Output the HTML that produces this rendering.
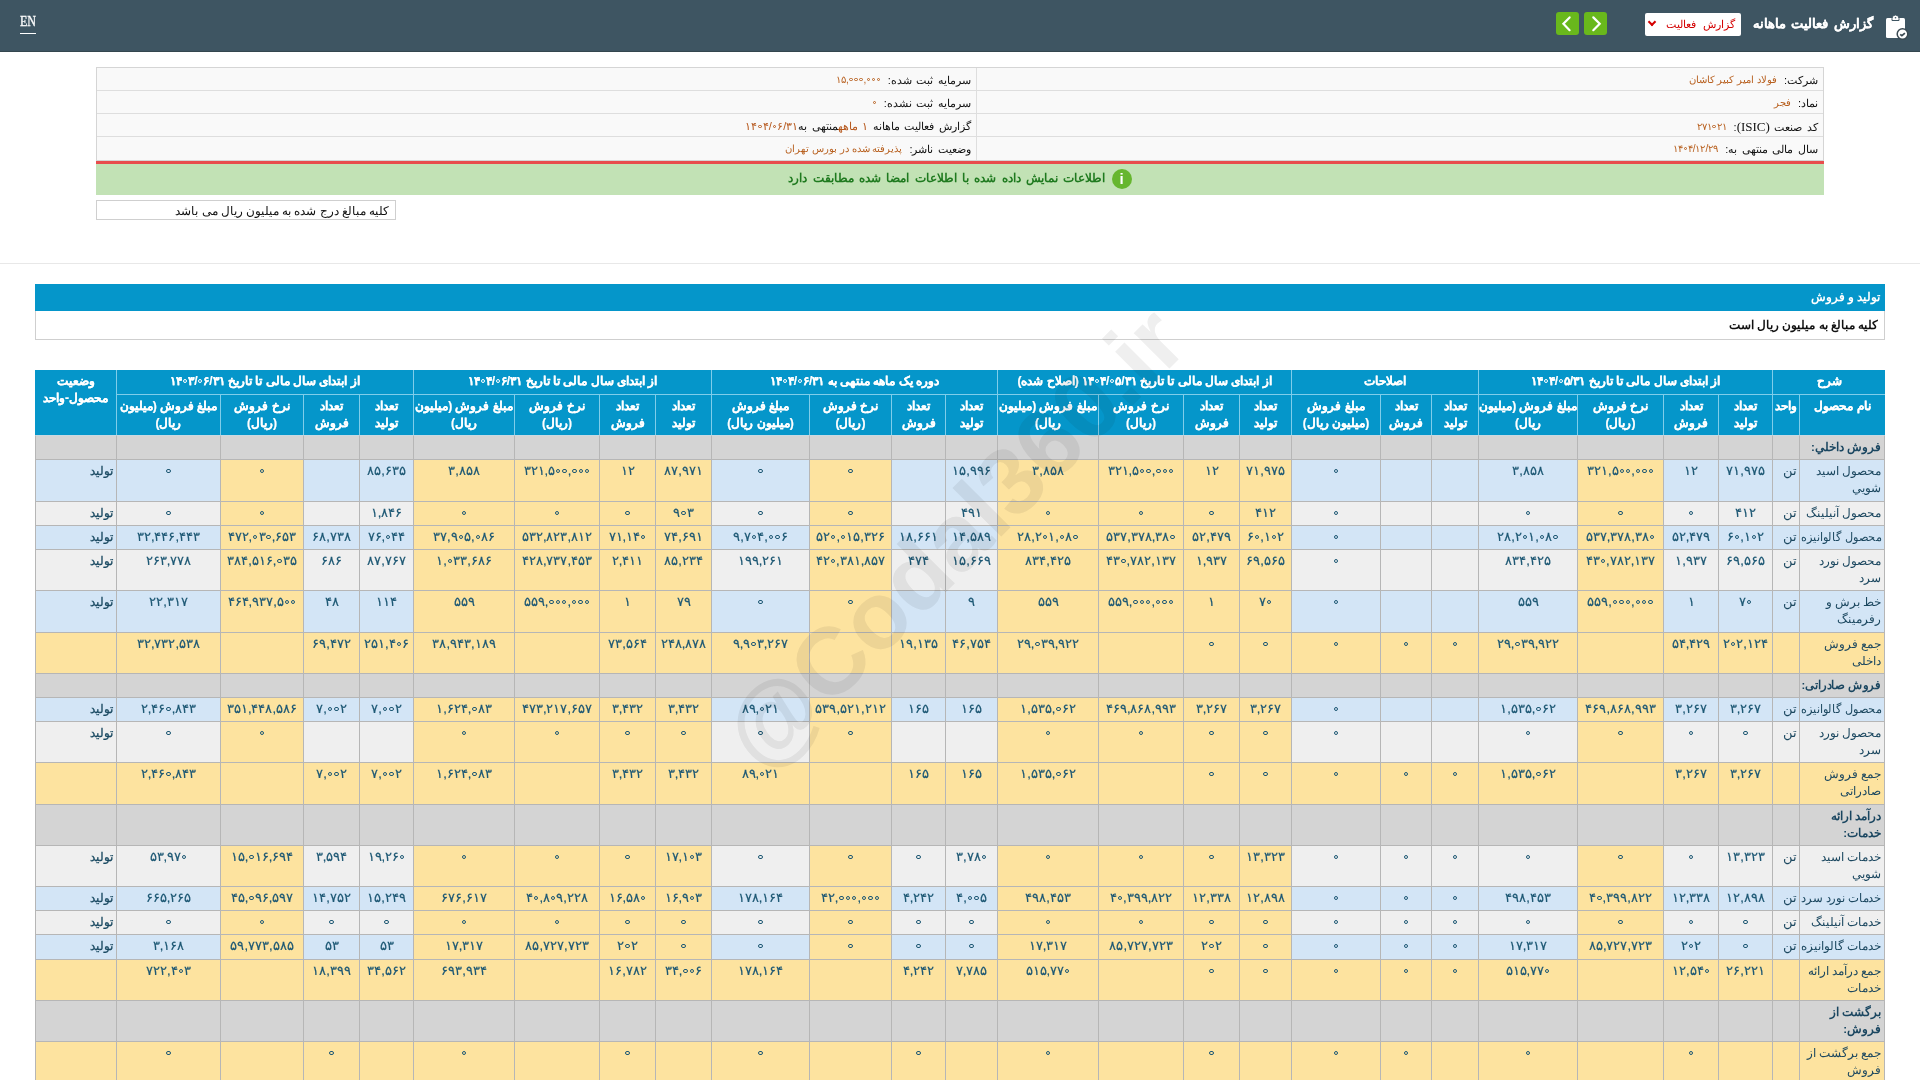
<!DOCTYPE html>
<html lang="fa" dir="rtl">
<head>
<meta charset="utf-8">
<title>گزارش فعالیت ماهانه</title>
<style>
*{box-sizing:border-box;margin:0;padding:0}
html,body{width:1920px;height:1080px;overflow:hidden;background:#fff}
body{position:relative;font-family:"Liberation Sans",sans-serif;font-size:12px;color:#222}
.abs{position:absolute}
#topbar{position:absolute;left:0;top:0;width:1920px;height:52px;background:#3e5562;border-bottom:1px solid #34474f}
#en{position:absolute;left:20px;top:14px;font-family:"Liberation Serif",serif;font-size:14px;font-weight:normal;-webkit-text-stroke:0.3px #fff;color:#fff;direction:ltr;border-bottom:1px solid #fff;line-height:16px;padding-bottom:3px;width:16px;overflow:visible;white-space:nowrap}
#title{position:absolute;right:47px;top:14px;color:#fff;font-size:13px;word-spacing:2px;font-weight:bold;-webkit-text-stroke:0.15px #fff;line-height:20px;white-space:nowrap}
#sel{position:absolute;left:1645px;top:13px;width:96px;height:23px;background:#fff;border-radius:2px;color:#d40000;font-size:11px;line-height:23px;word-spacing:4px;padding-right:6px;white-space:nowrap;overflow:hidden}
#sel .arr{position:absolute;left:4px;top:6px;width:6px;height:6px;border-right:2.5px solid #d40000;border-bottom:2.5px solid #d40000;transform:rotate(45deg)}
.gbtn{position:absolute;top:12px;width:23px;height:23px;background:#69b81c;border-radius:3px}
.gbtn i{position:absolute;top:6px;width:11px;height:11px;border-left:3px solid #fff;border-bottom:3px solid #fff}
#info{position:absolute;left:96px;top:67px;width:1728px;height:94px;border:1px solid #d5d5d5;background:#f9f9f9}
.ir{position:absolute;height:23px;border-bottom:1px solid #dedede;font-size:11px;word-spacing:1.5px;line-height:25px;white-space:nowrap;color:#111}
.ir .v{color:#b8601f;margin-right:7px;font-size:10px;word-spacing:0;position:relative;top:-1px}
.ser{font-family:"Liberation Serif",serif;font-size:13px}
#redline{position:absolute;left:96px;top:161px;width:1728px;height:3px;background:#e84c4c}
#green{position:absolute;left:96px;top:164px;width:1728px;height:31px;background:#c2e2b5;color:#1f7a1f;font-size:12px;word-spacing:2px;font-weight:bold;text-align:center;line-height:29px}
#green .ic{display:inline-block;width:20px;height:20px;border-radius:50%;background:#66b62e;color:#fff;font-size:15px;line-height:20px;vertical-align:middle;margin-left:6px;font-family:"Liberation Sans",sans-serif;font-weight:bold;text-align:center}
#note{position:absolute;left:96px;top:200px;width:300px;height:20px;border:1px solid #cfcfcf;background:#fff;font-size:11.5px;line-height:20px;padding-right:6px;white-space:nowrap;color:#111}
#hr{position:absolute;left:0;top:263px;width:1920px;height:1px;background:#e8e8e8}
#sec{position:absolute;left:35px;top:284px;width:1850px;height:27px;background:#0596ca;color:#fff;font-weight:bold;font-size:11.5px;line-height:27px;padding-right:5px}
#sub{position:absolute;left:35px;top:311px;width:1850px;height:29px;border:1px solid #cfcfcf;border-top:none;background:#fff;color:#111;font-weight:bold;font-size:11.5px;line-height:28px;padding-right:6px}
.c{position:absolute;border-left:1px solid #b6b6b6;border-top:1px solid #b6b6b6;overflow:hidden;white-space:nowrap;font-size:12px;line-height:17px;padding-top:3px;text-align:center;color:#184f68}
.c .num{font-weight:normal;font-size:13px;-webkit-text-stroke:0.2px currentColor;color:#1d5874;direction:ltr;unicode-bidi:bidi-override;display:inline-block;position:relative;top:-1px}
.z{display:inline-block;width:.34em;height:.34em;border:.125em solid currentColor;border-radius:50%;margin:0 .08em 0 .07em;vertical-align:.16em}
.c .nm{display:block;text-align:right;padding-right:3px;color:#1c4860;font-size:11.5px;letter-spacing:-0.2px}
.c .cat{font-weight:bold;color:#1a4660}
.c .unit{display:block;text-align:right;padding-right:2px;color:#1c4860;font-size:13px;position:relative;top:-1px}
.c .st{display:block;text-align:right;padding-right:3px;color:#1a4a62;-webkit-text-stroke:0.3px #1a4a62}
.h{position:absolute;background:#0596ca;color:#fff;font-weight:bold;-webkit-text-stroke:0.2px #fff;text-align:center;font-size:12px;line-height:17px;padding-top:3px;white-space:nowrap;overflow:hidden}
#wm{position:absolute;left:954px;top:538px;font-size:95px;line-height:95px;font-weight:bold;color:rgb(239,239,239);mix-blend-mode:multiply;white-space:nowrap;direction:ltr;transform:translate(-50%,-50%) rotate(-45deg);pointer-events:none;font-family:"Liberation Sans",sans-serif}
</style>
</head>
<body>
<div id="topbar">
  <div id="en"><span style="display:inline-block;transform:scaleX(0.86);transform-origin:0 50%">EN</span></div>
  <div class="gbtn" style="left:1556px"><svg width="23" height="23" viewBox="0 0 23 23" style="position:absolute;left:0;top:0"><path d="M13.6 5.4 L7.4 11.8 L13.6 18.2" stroke="#fff" stroke-width="2.2" fill="none" stroke-linecap="round" stroke-linejoin="miter"/></svg></div>
  <div class="gbtn" style="left:1584px"><svg width="23" height="23" viewBox="0 0 23 23" style="position:absolute;left:0;top:0"><path d="M9.3 5.4 L15.7 11.8 L9.3 18.2" stroke="#fff" stroke-width="2.2" fill="none" stroke-linecap="round" stroke-linejoin="miter"/></svg></div>
  <div id="sel">گزارش فعالیت<span class="arr"></span></div>
  <div id="title">گزارش فعالیت ماهانه</div>
  <svg class="abs" style="left:1884px;top:14px" width="26" height="26" viewBox="0 0 26 26">
    <rect x="2" y="4" width="19" height="20" rx="1.5" fill="#fff"/>
    <path d="M8 6.5 V4.5 A3.5 3.5 0 0 1 15 4.5 V6.5 Z" fill="#fff" stroke="#3e5562" stroke-width="1"/>
    <circle cx="11.5" cy="3.8" r="0.8" fill="#3e5562"/>
    <circle cx="18.5" cy="20" r="5.3" fill="#fff" stroke="#3b4a52" stroke-width="1.5"/>
    <path d="M16.2 20.3 l1.7 1.4 l3 -2.6" stroke="#3b4a52" stroke-width="1.7" fill="none"/>
  </svg>
</div>

<div id="info">
  <div class="ir" style="right:0;top:0;width:847px;border-left:1px solid #dedede;padding-right:5px">شرکت:<span class="v">فولاد امیر کبیر کاشان</span></div>
  <div class="ir" style="right:0;top:23px;width:847px;border-left:1px solid #dedede;padding-right:5px">نماد:<span class="v">فجر</span></div>
  <div class="ir" style="right:0;top:46px;width:847px;border-left:1px solid #dedede;padding-right:5px">کد صنعت <span class="ser">(ISIC)</span>:<span class="v"><bdo dir="ltr">۲۷۱<i class="z"></i>۲۱</bdo></span></div>
  <div class="ir" style="right:0;top:69px;width:847px;border-left:1px solid #dedede;border-bottom:none;padding-right:5px">سال مالی منتهی به:<span class="v"><bdo dir="ltr">۱۴<i class="z"></i>۴/۱۲/۲۹</bdo></span></div>
  <div class="ir" style="left:0;top:0;width:879px;padding-right:5px">سرمایه ثبت شده:<span class="v"><bdo dir="ltr">۱۵,<i class="z"></i><i class="z"></i><i class="z"></i>,<i class="z"></i><i class="z"></i><i class="z"></i></bdo></span></div>
  <div class="ir" style="left:0;top:23px;width:879px;padding-right:5px">سرمایه ثبت نشده:<span class="v"><bdo dir="ltr"><i class="z"></i></bdo></span></div>
  <div class="ir" style="left:0;top:46px;width:879px;padding-right:5px">گزارش فعالیت ماهانه <span style="color:#b5561a">۱ ماهه</span>منتهی به<span style="color:#b5561a"><bdo dir="ltr">۱۴<i class="z"></i>۴/<i class="z"></i>۶/۳۱</bdo></span></div>
  <div class="ir" style="left:0;top:69px;width:879px;border-bottom:none;padding-right:5px">وضعیت ناشر:<span class="v">پذیرفته شده در بورس تهران</span></div>
</div>
<div id="redline"></div>
<div id="green"><span class="ic">i</span>اطلاعات نمایش داده شده با اطلاعات امضا شده مطابقت دارد</div>
<div id="note">کلیه مبالغ درج شده به میلیون ریال می باشد</div>
<div id="hr"></div>

<div id="sec">تولید و فروش</div>
<div id="sub">کلیه مبالغ به میلیون ریال است</div>

<div id="tbl">
<div class="c" style="left:35px;top:435px;width:81px;height:24px;background:#d4d4d4;border-top-color:#c9d9e2"></div>
<div class="c" style="left:116px;top:435px;width:104px;height:24px;background:#d4d4d4;border-top-color:#c9d9e2"></div>
<div class="c" style="left:220px;top:435px;width:83px;height:24px;background:#d4d4d4;border-top-color:#c9d9e2"></div>
<div class="c" style="left:303px;top:435px;width:56px;height:24px;background:#d4d4d4;border-top-color:#c9d9e2"></div>
<div class="c" style="left:359px;top:435px;width:54px;height:24px;background:#d4d4d4;border-top-color:#c9d9e2"></div>
<div class="c" style="left:413px;top:435px;width:101px;height:24px;background:#d4d4d4;border-top-color:#c9d9e2"></div>
<div class="c" style="left:514px;top:435px;width:85px;height:24px;background:#d4d4d4;border-top-color:#c9d9e2"></div>
<div class="c" style="left:599px;top:435px;width:56px;height:24px;background:#d4d4d4;border-top-color:#c9d9e2"></div>
<div class="c" style="left:655px;top:435px;width:56px;height:24px;background:#d4d4d4;border-top-color:#c9d9e2"></div>
<div class="c" style="left:711px;top:435px;width:98px;height:24px;background:#d4d4d4;border-top-color:#c9d9e2"></div>
<div class="c" style="left:809px;top:435px;width:82px;height:24px;background:#d4d4d4;border-top-color:#c9d9e2"></div>
<div class="c" style="left:891px;top:435px;width:54px;height:24px;background:#d4d4d4;border-top-color:#c9d9e2"></div>
<div class="c" style="left:945px;top:435px;width:52px;height:24px;background:#d4d4d4;border-top-color:#c9d9e2"></div>
<div class="c" style="left:997px;top:435px;width:101px;height:24px;background:#d4d4d4;border-top-color:#c9d9e2"></div>
<div class="c" style="left:1098px;top:435px;width:85px;height:24px;background:#d4d4d4;border-top-color:#c9d9e2"></div>
<div class="c" style="left:1183px;top:435px;width:56px;height:24px;background:#d4d4d4;border-top-color:#c9d9e2"></div>
<div class="c" style="left:1239px;top:435px;width:52px;height:24px;background:#d4d4d4;border-top-color:#c9d9e2"></div>
<div class="c" style="left:1291px;top:435px;width:89px;height:24px;background:#d4d4d4;border-top-color:#c9d9e2"></div>
<div class="c" style="left:1380px;top:435px;width:51px;height:24px;background:#d4d4d4;border-top-color:#c9d9e2"></div>
<div class="c" style="left:1431px;top:435px;width:47px;height:24px;background:#d4d4d4;border-top-color:#c9d9e2"></div>
<div class="c" style="left:1478px;top:435px;width:99px;height:24px;background:#d4d4d4;border-top-color:#c9d9e2"></div>
<div class="c" style="left:1577px;top:435px;width:86px;height:24px;background:#d4d4d4;border-top-color:#c9d9e2"></div>
<div class="c" style="left:1663px;top:435px;width:55px;height:24px;background:#d4d4d4;border-top-color:#c9d9e2"></div>
<div class="c" style="left:1718px;top:435px;width:54px;height:24px;background:#d4d4d4;border-top-color:#c9d9e2"></div>
<div class="c" style="left:1772px;top:435px;width:27px;height:24px;background:#d4d4d4;border-top-color:#c9d9e2"></div>
<div class="c" style="left:1799px;top:435px;width:86px;height:24px;background:#d4d4d4;border-right:1px solid #b6b6b6;border-top-color:#c9d9e2"><span class="nm cat">فروش داخلي:</span></div>
<div class="c" style="left:35px;top:459px;width:81px;height:42px;background:#d3e5f6"><span class="st">تولید</span></div>
<div class="c" style="left:116px;top:459px;width:104px;height:42px;background:#d3e5f6"><span class="num"><bdo dir="ltr"><i class="z"></i></bdo></span></div>
<div class="c" style="left:220px;top:459px;width:83px;height:42px;background:#fde39f"><span class="num"><bdo dir="ltr"><i class="z"></i></bdo></span></div>
<div class="c" style="left:303px;top:459px;width:56px;height:42px;background:#d3e5f6"></div>
<div class="c" style="left:359px;top:459px;width:54px;height:42px;background:#d3e5f6"><span class="num">۸۵,۶۳۵</span></div>
<div class="c" style="left:413px;top:459px;width:101px;height:42px;background:#fde39f"><span class="num">۳,۸۵۸</span></div>
<div class="c" style="left:514px;top:459px;width:85px;height:42px;background:#fde39f"><span class="num"><bdo dir="ltr">۳۲۱,۵<i class="z"></i><i class="z"></i>,<i class="z"></i><i class="z"></i><i class="z"></i></bdo></span></div>
<div class="c" style="left:599px;top:459px;width:56px;height:42px;background:#fde39f"><span class="num">۱۲</span></div>
<div class="c" style="left:655px;top:459px;width:56px;height:42px;background:#fde39f"><span class="num">۸۷,۹۷۱</span></div>
<div class="c" style="left:711px;top:459px;width:98px;height:42px;background:#d3e5f6"><span class="num"><bdo dir="ltr"><i class="z"></i></bdo></span></div>
<div class="c" style="left:809px;top:459px;width:82px;height:42px;background:#fde39f"><span class="num"><bdo dir="ltr"><i class="z"></i></bdo></span></div>
<div class="c" style="left:891px;top:459px;width:54px;height:42px;background:#d3e5f6"></div>
<div class="c" style="left:945px;top:459px;width:52px;height:42px;background:#d3e5f6"><span class="num">۱۵,۹۹۶</span></div>
<div class="c" style="left:997px;top:459px;width:101px;height:42px;background:#fde39f"><span class="num">۳,۸۵۸</span></div>
<div class="c" style="left:1098px;top:459px;width:85px;height:42px;background:#fde39f"><span class="num"><bdo dir="ltr">۳۲۱,۵<i class="z"></i><i class="z"></i>,<i class="z"></i><i class="z"></i><i class="z"></i></bdo></span></div>
<div class="c" style="left:1183px;top:459px;width:56px;height:42px;background:#fde39f"><span class="num">۱۲</span></div>
<div class="c" style="left:1239px;top:459px;width:52px;height:42px;background:#fde39f"><span class="num">۷۱,۹۷۵</span></div>
<div class="c" style="left:1291px;top:459px;width:89px;height:42px;background:#d3e5f6"><span class="num"><bdo dir="ltr"><i class="z"></i></bdo></span></div>
<div class="c" style="left:1380px;top:459px;width:51px;height:42px;background:#d3e5f6"></div>
<div class="c" style="left:1431px;top:459px;width:47px;height:42px;background:#d3e5f6"></div>
<div class="c" style="left:1478px;top:459px;width:99px;height:42px;background:#d3e5f6"><span class="num">۳,۸۵۸</span></div>
<div class="c" style="left:1577px;top:459px;width:86px;height:42px;background:#fde39f"><span class="num"><bdo dir="ltr">۳۲۱,۵<i class="z"></i><i class="z"></i>,<i class="z"></i><i class="z"></i><i class="z"></i></bdo></span></div>
<div class="c" style="left:1663px;top:459px;width:55px;height:42px;background:#d3e5f6"><span class="num">۱۲</span></div>
<div class="c" style="left:1718px;top:459px;width:54px;height:42px;background:#d3e5f6"><span class="num">۷۱,۹۷۵</span></div>
<div class="c" style="left:1772px;top:459px;width:27px;height:42px;background:#d3e5f6"><span class="unit">تن</span></div>
<div class="c" style="left:1799px;top:459px;width:86px;height:42px;background:#d3e5f6;border-right:1px solid #b6b6b6"><span class="nm">محصول اسید<br>شويي</span></div>
<div class="c" style="left:35px;top:501px;width:81px;height:24px;background:#efefef"><span class="st">تولید</span></div>
<div class="c" style="left:116px;top:501px;width:104px;height:24px;background:#efefef"><span class="num"><bdo dir="ltr"><i class="z"></i></bdo></span></div>
<div class="c" style="left:220px;top:501px;width:83px;height:24px;background:#fde39f"><span class="num"><bdo dir="ltr"><i class="z"></i></bdo></span></div>
<div class="c" style="left:303px;top:501px;width:56px;height:24px;background:#efefef"></div>
<div class="c" style="left:359px;top:501px;width:54px;height:24px;background:#efefef"><span class="num">۱,۸۴۶</span></div>
<div class="c" style="left:413px;top:501px;width:101px;height:24px;background:#fde39f"><span class="num"><bdo dir="ltr"><i class="z"></i></bdo></span></div>
<div class="c" style="left:514px;top:501px;width:85px;height:24px;background:#fde39f"><span class="num"><bdo dir="ltr"><i class="z"></i></bdo></span></div>
<div class="c" style="left:599px;top:501px;width:56px;height:24px;background:#fde39f"><span class="num"><bdo dir="ltr"><i class="z"></i></bdo></span></div>
<div class="c" style="left:655px;top:501px;width:56px;height:24px;background:#fde39f"><span class="num"><bdo dir="ltr">۹<i class="z"></i>۳</bdo></span></div>
<div class="c" style="left:711px;top:501px;width:98px;height:24px;background:#efefef"><span class="num"><bdo dir="ltr"><i class="z"></i></bdo></span></div>
<div class="c" style="left:809px;top:501px;width:82px;height:24px;background:#fde39f"><span class="num"><bdo dir="ltr"><i class="z"></i></bdo></span></div>
<div class="c" style="left:891px;top:501px;width:54px;height:24px;background:#efefef"></div>
<div class="c" style="left:945px;top:501px;width:52px;height:24px;background:#efefef"><span class="num">۴۹۱</span></div>
<div class="c" style="left:997px;top:501px;width:101px;height:24px;background:#fde39f"><span class="num"><bdo dir="ltr"><i class="z"></i></bdo></span></div>
<div class="c" style="left:1098px;top:501px;width:85px;height:24px;background:#fde39f"><span class="num"><bdo dir="ltr"><i class="z"></i></bdo></span></div>
<div class="c" style="left:1183px;top:501px;width:56px;height:24px;background:#fde39f"><span class="num"><bdo dir="ltr"><i class="z"></i></bdo></span></div>
<div class="c" style="left:1239px;top:501px;width:52px;height:24px;background:#fde39f"><span class="num">۴۱۲</span></div>
<div class="c" style="left:1291px;top:501px;width:89px;height:24px;background:#efefef"><span class="num"><bdo dir="ltr"><i class="z"></i></bdo></span></div>
<div class="c" style="left:1380px;top:501px;width:51px;height:24px;background:#efefef"></div>
<div class="c" style="left:1431px;top:501px;width:47px;height:24px;background:#efefef"></div>
<div class="c" style="left:1478px;top:501px;width:99px;height:24px;background:#efefef"><span class="num"><bdo dir="ltr"><i class="z"></i></bdo></span></div>
<div class="c" style="left:1577px;top:501px;width:86px;height:24px;background:#fde39f"><span class="num"><bdo dir="ltr"><i class="z"></i></bdo></span></div>
<div class="c" style="left:1663px;top:501px;width:55px;height:24px;background:#efefef"><span class="num"><bdo dir="ltr"><i class="z"></i></bdo></span></div>
<div class="c" style="left:1718px;top:501px;width:54px;height:24px;background:#efefef"><span class="num">۴۱۲</span></div>
<div class="c" style="left:1772px;top:501px;width:27px;height:24px;background:#efefef"><span class="unit">تن</span></div>
<div class="c" style="left:1799px;top:501px;width:86px;height:24px;background:#efefef;border-right:1px solid #b6b6b6"><span class="nm">محصول آنیلینگ</span></div>
<div class="c" style="left:35px;top:525px;width:81px;height:24px;background:#d3e5f6"><span class="st">تولید</span></div>
<div class="c" style="left:116px;top:525px;width:104px;height:24px;background:#d3e5f6"><span class="num">۳۲,۴۴۶,۴۴۳</span></div>
<div class="c" style="left:220px;top:525px;width:83px;height:24px;background:#fde39f"><span class="num"><bdo dir="ltr">۴۷۲,<i class="z"></i>۳<i class="z"></i>,۶۵۳</bdo></span></div>
<div class="c" style="left:303px;top:525px;width:56px;height:24px;background:#d3e5f6"><span class="num">۶۸,۷۳۸</span></div>
<div class="c" style="left:359px;top:525px;width:54px;height:24px;background:#d3e5f6"><span class="num"><bdo dir="ltr">۷۶,<i class="z"></i>۴۴</bdo></span></div>
<div class="c" style="left:413px;top:525px;width:101px;height:24px;background:#fde39f"><span class="num"><bdo dir="ltr">۳۷,۹<i class="z"></i>۵,<i class="z"></i>۸۶</bdo></span></div>
<div class="c" style="left:514px;top:525px;width:85px;height:24px;background:#fde39f"><span class="num">۵۳۲,۸۲۳,۸۱۲</span></div>
<div class="c" style="left:599px;top:525px;width:56px;height:24px;background:#fde39f"><span class="num"><bdo dir="ltr">۷۱,۱۴<i class="z"></i></bdo></span></div>
<div class="c" style="left:655px;top:525px;width:56px;height:24px;background:#fde39f"><span class="num">۷۴,۶۹۱</span></div>
<div class="c" style="left:711px;top:525px;width:98px;height:24px;background:#d3e5f6"><span class="num"><bdo dir="ltr">۹,۷<i class="z"></i>۴,<i class="z"></i><i class="z"></i>۶</bdo></span></div>
<div class="c" style="left:809px;top:525px;width:82px;height:24px;background:#fde39f"><span class="num"><bdo dir="ltr">۵۲<i class="z"></i>,<i class="z"></i>۱۵,۳۲۶</bdo></span></div>
<div class="c" style="left:891px;top:525px;width:54px;height:24px;background:#d3e5f6"><span class="num">۱۸,۶۶۱</span></div>
<div class="c" style="left:945px;top:525px;width:52px;height:24px;background:#d3e5f6"><span class="num">۱۴,۵۸۹</span></div>
<div class="c" style="left:997px;top:525px;width:101px;height:24px;background:#fde39f"><span class="num"><bdo dir="ltr">۲۸,۲<i class="z"></i>۱,<i class="z"></i>۸<i class="z"></i></bdo></span></div>
<div class="c" style="left:1098px;top:525px;width:85px;height:24px;background:#fde39f"><span class="num"><bdo dir="ltr">۵۳۷,۳۷۸,۳۸<i class="z"></i></bdo></span></div>
<div class="c" style="left:1183px;top:525px;width:56px;height:24px;background:#fde39f"><span class="num">۵۲,۴۷۹</span></div>
<div class="c" style="left:1239px;top:525px;width:52px;height:24px;background:#fde39f"><span class="num"><bdo dir="ltr">۶<i class="z"></i>,۱<i class="z"></i>۲</bdo></span></div>
<div class="c" style="left:1291px;top:525px;width:89px;height:24px;background:#d3e5f6"><span class="num"><bdo dir="ltr"><i class="z"></i></bdo></span></div>
<div class="c" style="left:1380px;top:525px;width:51px;height:24px;background:#d3e5f6"></div>
<div class="c" style="left:1431px;top:525px;width:47px;height:24px;background:#d3e5f6"></div>
<div class="c" style="left:1478px;top:525px;width:99px;height:24px;background:#d3e5f6"><span class="num"><bdo dir="ltr">۲۸,۲<i class="z"></i>۱,<i class="z"></i>۸<i class="z"></i></bdo></span></div>
<div class="c" style="left:1577px;top:525px;width:86px;height:24px;background:#fde39f"><span class="num"><bdo dir="ltr">۵۳۷,۳۷۸,۳۸<i class="z"></i></bdo></span></div>
<div class="c" style="left:1663px;top:525px;width:55px;height:24px;background:#d3e5f6"><span class="num">۵۲,۴۷۹</span></div>
<div class="c" style="left:1718px;top:525px;width:54px;height:24px;background:#d3e5f6"><span class="num"><bdo dir="ltr">۶<i class="z"></i>,۱<i class="z"></i>۲</bdo></span></div>
<div class="c" style="left:1772px;top:525px;width:27px;height:24px;background:#d3e5f6"><span class="unit">تن</span></div>
<div class="c" style="left:1799px;top:525px;width:86px;height:24px;background:#d3e5f6;border-right:1px solid #b6b6b6"><span class="nm" style="transform:scaleX(0.94);transform-origin:100% 50%">محصول گالوانیزه</span></div>
<div class="c" style="left:35px;top:549px;width:81px;height:41px;background:#efefef"><span class="st">تولید</span></div>
<div class="c" style="left:116px;top:549px;width:104px;height:41px;background:#efefef"><span class="num">۲۶۳,۷۷۸</span></div>
<div class="c" style="left:220px;top:549px;width:83px;height:41px;background:#fde39f"><span class="num"><bdo dir="ltr">۳۸۴,۵۱۶,<i class="z"></i>۳۵</bdo></span></div>
<div class="c" style="left:303px;top:549px;width:56px;height:41px;background:#efefef"><span class="num">۶۸۶</span></div>
<div class="c" style="left:359px;top:549px;width:54px;height:41px;background:#efefef"><span class="num">۸۷,۷۶۷</span></div>
<div class="c" style="left:413px;top:549px;width:101px;height:41px;background:#fde39f"><span class="num"><bdo dir="ltr">۱,<i class="z"></i>۳۳,۶۸۶</bdo></span></div>
<div class="c" style="left:514px;top:549px;width:85px;height:41px;background:#fde39f"><span class="num">۴۲۸,۷۳۷,۴۵۳</span></div>
<div class="c" style="left:599px;top:549px;width:56px;height:41px;background:#fde39f"><span class="num">۲,۴۱۱</span></div>
<div class="c" style="left:655px;top:549px;width:56px;height:41px;background:#fde39f"><span class="num">۸۵,۲۳۴</span></div>
<div class="c" style="left:711px;top:549px;width:98px;height:41px;background:#efefef"><span class="num">۱۹۹,۲۶۱</span></div>
<div class="c" style="left:809px;top:549px;width:82px;height:41px;background:#fde39f"><span class="num"><bdo dir="ltr">۴۲<i class="z"></i>,۳۸۱,۸۵۷</bdo></span></div>
<div class="c" style="left:891px;top:549px;width:54px;height:41px;background:#efefef"><span class="num">۴۷۴</span></div>
<div class="c" style="left:945px;top:549px;width:52px;height:41px;background:#efefef"><span class="num">۱۵,۶۶۹</span></div>
<div class="c" style="left:997px;top:549px;width:101px;height:41px;background:#fde39f"><span class="num">۸۳۴,۴۲۵</span></div>
<div class="c" style="left:1098px;top:549px;width:85px;height:41px;background:#fde39f"><span class="num"><bdo dir="ltr">۴۳<i class="z"></i>,۷۸۲,۱۳۷</bdo></span></div>
<div class="c" style="left:1183px;top:549px;width:56px;height:41px;background:#fde39f"><span class="num">۱,۹۳۷</span></div>
<div class="c" style="left:1239px;top:549px;width:52px;height:41px;background:#fde39f"><span class="num">۶۹,۵۶۵</span></div>
<div class="c" style="left:1291px;top:549px;width:89px;height:41px;background:#efefef"><span class="num"><bdo dir="ltr"><i class="z"></i></bdo></span></div>
<div class="c" style="left:1380px;top:549px;width:51px;height:41px;background:#efefef"></div>
<div class="c" style="left:1431px;top:549px;width:47px;height:41px;background:#efefef"></div>
<div class="c" style="left:1478px;top:549px;width:99px;height:41px;background:#efefef"><span class="num">۸۳۴,۴۲۵</span></div>
<div class="c" style="left:1577px;top:549px;width:86px;height:41px;background:#fde39f"><span class="num"><bdo dir="ltr">۴۳<i class="z"></i>,۷۸۲,۱۳۷</bdo></span></div>
<div class="c" style="left:1663px;top:549px;width:55px;height:41px;background:#efefef"><span class="num">۱,۹۳۷</span></div>
<div class="c" style="left:1718px;top:549px;width:54px;height:41px;background:#efefef"><span class="num">۶۹,۵۶۵</span></div>
<div class="c" style="left:1772px;top:549px;width:27px;height:41px;background:#efefef"><span class="unit">تن</span></div>
<div class="c" style="left:1799px;top:549px;width:86px;height:41px;background:#efefef;border-right:1px solid #b6b6b6"><span class="nm">محصول نورد<br>سرد</span></div>
<div class="c" style="left:35px;top:590px;width:81px;height:42px;background:#d3e5f6"><span class="st">تولید</span></div>
<div class="c" style="left:116px;top:590px;width:104px;height:42px;background:#d3e5f6"><span class="num">۲۲,۳۱۷</span></div>
<div class="c" style="left:220px;top:590px;width:83px;height:42px;background:#fde39f"><span class="num"><bdo dir="ltr">۴۶۴,۹۳۷,۵<i class="z"></i><i class="z"></i></bdo></span></div>
<div class="c" style="left:303px;top:590px;width:56px;height:42px;background:#d3e5f6"><span class="num">۴۸</span></div>
<div class="c" style="left:359px;top:590px;width:54px;height:42px;background:#d3e5f6"><span class="num">۱۱۴</span></div>
<div class="c" style="left:413px;top:590px;width:101px;height:42px;background:#fde39f"><span class="num">۵۵۹</span></div>
<div class="c" style="left:514px;top:590px;width:85px;height:42px;background:#fde39f"><span class="num"><bdo dir="ltr">۵۵۹,<i class="z"></i><i class="z"></i><i class="z"></i>,<i class="z"></i><i class="z"></i><i class="z"></i></bdo></span></div>
<div class="c" style="left:599px;top:590px;width:56px;height:42px;background:#fde39f"><span class="num">۱</span></div>
<div class="c" style="left:655px;top:590px;width:56px;height:42px;background:#fde39f"><span class="num">۷۹</span></div>
<div class="c" style="left:711px;top:590px;width:98px;height:42px;background:#d3e5f6"><span class="num"><bdo dir="ltr"><i class="z"></i></bdo></span></div>
<div class="c" style="left:809px;top:590px;width:82px;height:42px;background:#fde39f"><span class="num"><bdo dir="ltr"><i class="z"></i></bdo></span></div>
<div class="c" style="left:891px;top:590px;width:54px;height:42px;background:#d3e5f6"></div>
<div class="c" style="left:945px;top:590px;width:52px;height:42px;background:#d3e5f6"><span class="num">۹</span></div>
<div class="c" style="left:997px;top:590px;width:101px;height:42px;background:#fde39f"><span class="num">۵۵۹</span></div>
<div class="c" style="left:1098px;top:590px;width:85px;height:42px;background:#fde39f"><span class="num"><bdo dir="ltr">۵۵۹,<i class="z"></i><i class="z"></i><i class="z"></i>,<i class="z"></i><i class="z"></i><i class="z"></i></bdo></span></div>
<div class="c" style="left:1183px;top:590px;width:56px;height:42px;background:#fde39f"><span class="num">۱</span></div>
<div class="c" style="left:1239px;top:590px;width:52px;height:42px;background:#fde39f"><span class="num"><bdo dir="ltr">۷<i class="z"></i></bdo></span></div>
<div class="c" style="left:1291px;top:590px;width:89px;height:42px;background:#d3e5f6"><span class="num"><bdo dir="ltr"><i class="z"></i></bdo></span></div>
<div class="c" style="left:1380px;top:590px;width:51px;height:42px;background:#d3e5f6"></div>
<div class="c" style="left:1431px;top:590px;width:47px;height:42px;background:#d3e5f6"></div>
<div class="c" style="left:1478px;top:590px;width:99px;height:42px;background:#d3e5f6"><span class="num">۵۵۹</span></div>
<div class="c" style="left:1577px;top:590px;width:86px;height:42px;background:#fde39f"><span class="num"><bdo dir="ltr">۵۵۹,<i class="z"></i><i class="z"></i><i class="z"></i>,<i class="z"></i><i class="z"></i><i class="z"></i></bdo></span></div>
<div class="c" style="left:1663px;top:590px;width:55px;height:42px;background:#d3e5f6"><span class="num">۱</span></div>
<div class="c" style="left:1718px;top:590px;width:54px;height:42px;background:#d3e5f6"><span class="num"><bdo dir="ltr">۷<i class="z"></i></bdo></span></div>
<div class="c" style="left:1772px;top:590px;width:27px;height:42px;background:#d3e5f6"><span class="unit">تن</span></div>
<div class="c" style="left:1799px;top:590px;width:86px;height:42px;background:#d3e5f6;border-right:1px solid #b6b6b6"><span class="nm">خط برش و<br>رفرمینگ</span></div>
<div class="c" style="left:35px;top:632px;width:81px;height:41px;background:#fde39f"></div>
<div class="c" style="left:116px;top:632px;width:104px;height:41px;background:#fde39f"><span class="num">۳۲,۷۳۲,۵۳۸</span></div>
<div class="c" style="left:220px;top:632px;width:83px;height:41px;background:#fde39f"></div>
<div class="c" style="left:303px;top:632px;width:56px;height:41px;background:#fde39f"><span class="num">۶۹,۴۷۲</span></div>
<div class="c" style="left:359px;top:632px;width:54px;height:41px;background:#fde39f"><span class="num"><bdo dir="ltr">۲۵۱,۴<i class="z"></i>۶</bdo></span></div>
<div class="c" style="left:413px;top:632px;width:101px;height:41px;background:#fde39f"><span class="num">۳۸,۹۴۳,۱۸۹</span></div>
<div class="c" style="left:514px;top:632px;width:85px;height:41px;background:#fde39f"></div>
<div class="c" style="left:599px;top:632px;width:56px;height:41px;background:#fde39f"><span class="num">۷۳,۵۶۴</span></div>
<div class="c" style="left:655px;top:632px;width:56px;height:41px;background:#fde39f"><span class="num">۲۴۸,۸۷۸</span></div>
<div class="c" style="left:711px;top:632px;width:98px;height:41px;background:#fde39f"><span class="num"><bdo dir="ltr">۹,۹<i class="z"></i>۳,۲۶۷</bdo></span></div>
<div class="c" style="left:809px;top:632px;width:82px;height:41px;background:#fde39f"></div>
<div class="c" style="left:891px;top:632px;width:54px;height:41px;background:#fde39f"><span class="num">۱۹,۱۳۵</span></div>
<div class="c" style="left:945px;top:632px;width:52px;height:41px;background:#fde39f"><span class="num">۴۶,۷۵۴</span></div>
<div class="c" style="left:997px;top:632px;width:101px;height:41px;background:#fde39f"><span class="num"><bdo dir="ltr">۲۹,<i class="z"></i>۳۹,۹۲۲</bdo></span></div>
<div class="c" style="left:1098px;top:632px;width:85px;height:41px;background:#fde39f"></div>
<div class="c" style="left:1183px;top:632px;width:56px;height:41px;background:#fde39f"><span class="num"><bdo dir="ltr"><i class="z"></i></bdo></span></div>
<div class="c" style="left:1239px;top:632px;width:52px;height:41px;background:#fde39f"><span class="num"><bdo dir="ltr"><i class="z"></i></bdo></span></div>
<div class="c" style="left:1291px;top:632px;width:89px;height:41px;background:#fde39f"><span class="num"><bdo dir="ltr"><i class="z"></i></bdo></span></div>
<div class="c" style="left:1380px;top:632px;width:51px;height:41px;background:#fde39f"><span class="num"><bdo dir="ltr"><i class="z"></i></bdo></span></div>
<div class="c" style="left:1431px;top:632px;width:47px;height:41px;background:#fde39f"><span class="num"><bdo dir="ltr"><i class="z"></i></bdo></span></div>
<div class="c" style="left:1478px;top:632px;width:99px;height:41px;background:#fde39f"><span class="num"><bdo dir="ltr">۲۹,<i class="z"></i>۳۹,۹۲۲</bdo></span></div>
<div class="c" style="left:1577px;top:632px;width:86px;height:41px;background:#fde39f"></div>
<div class="c" style="left:1663px;top:632px;width:55px;height:41px;background:#fde39f"><span class="num">۵۴,۴۲۹</span></div>
<div class="c" style="left:1718px;top:632px;width:54px;height:41px;background:#fde39f"><span class="num"><bdo dir="ltr">۲<i class="z"></i>۲,۱۲۴</bdo></span></div>
<div class="c" style="left:1772px;top:632px;width:27px;height:41px;background:#fde39f"></div>
<div class="c" style="left:1799px;top:632px;width:86px;height:41px;background:#fde39f;border-right:1px solid #b6b6b6"><span class="nm">جمع فروش<br>داخلی</span></div>
<div class="c" style="left:35px;top:673px;width:81px;height:24px;background:#d4d4d4"></div>
<div class="c" style="left:116px;top:673px;width:104px;height:24px;background:#d4d4d4"></div>
<div class="c" style="left:220px;top:673px;width:83px;height:24px;background:#d4d4d4"></div>
<div class="c" style="left:303px;top:673px;width:56px;height:24px;background:#d4d4d4"></div>
<div class="c" style="left:359px;top:673px;width:54px;height:24px;background:#d4d4d4"></div>
<div class="c" style="left:413px;top:673px;width:101px;height:24px;background:#d4d4d4"></div>
<div class="c" style="left:514px;top:673px;width:85px;height:24px;background:#d4d4d4"></div>
<div class="c" style="left:599px;top:673px;width:56px;height:24px;background:#d4d4d4"></div>
<div class="c" style="left:655px;top:673px;width:56px;height:24px;background:#d4d4d4"></div>
<div class="c" style="left:711px;top:673px;width:98px;height:24px;background:#d4d4d4"></div>
<div class="c" style="left:809px;top:673px;width:82px;height:24px;background:#d4d4d4"></div>
<div class="c" style="left:891px;top:673px;width:54px;height:24px;background:#d4d4d4"></div>
<div class="c" style="left:945px;top:673px;width:52px;height:24px;background:#d4d4d4"></div>
<div class="c" style="left:997px;top:673px;width:101px;height:24px;background:#d4d4d4"></div>
<div class="c" style="left:1098px;top:673px;width:85px;height:24px;background:#d4d4d4"></div>
<div class="c" style="left:1183px;top:673px;width:56px;height:24px;background:#d4d4d4"></div>
<div class="c" style="left:1239px;top:673px;width:52px;height:24px;background:#d4d4d4"></div>
<div class="c" style="left:1291px;top:673px;width:89px;height:24px;background:#d4d4d4"></div>
<div class="c" style="left:1380px;top:673px;width:51px;height:24px;background:#d4d4d4"></div>
<div class="c" style="left:1431px;top:673px;width:47px;height:24px;background:#d4d4d4"></div>
<div class="c" style="left:1478px;top:673px;width:99px;height:24px;background:#d4d4d4"></div>
<div class="c" style="left:1577px;top:673px;width:86px;height:24px;background:#d4d4d4"></div>
<div class="c" style="left:1663px;top:673px;width:55px;height:24px;background:#d4d4d4"></div>
<div class="c" style="left:1718px;top:673px;width:54px;height:24px;background:#d4d4d4"></div>
<div class="c" style="left:1772px;top:673px;width:27px;height:24px;background:#d4d4d4"></div>
<div class="c" style="left:1799px;top:673px;width:86px;height:24px;background:#d4d4d4;border-right:1px solid #b6b6b6"><span class="nm cat" style="transform:scaleX(0.97);transform-origin:100% 50%">فروش صادراتی:</span></div>
<div class="c" style="left:35px;top:697px;width:81px;height:24px;background:#d3e5f6"><span class="st">تولید</span></div>
<div class="c" style="left:116px;top:697px;width:104px;height:24px;background:#d3e5f6"><span class="num"><bdo dir="ltr">۲,۴۶<i class="z"></i>,۸۴۳</bdo></span></div>
<div class="c" style="left:220px;top:697px;width:83px;height:24px;background:#fde39f"><span class="num">۳۵۱,۴۴۸,۵۸۶</span></div>
<div class="c" style="left:303px;top:697px;width:56px;height:24px;background:#d3e5f6"><span class="num"><bdo dir="ltr">۷,<i class="z"></i><i class="z"></i>۲</bdo></span></div>
<div class="c" style="left:359px;top:697px;width:54px;height:24px;background:#d3e5f6"><span class="num"><bdo dir="ltr">۷,<i class="z"></i><i class="z"></i>۲</bdo></span></div>
<div class="c" style="left:413px;top:697px;width:101px;height:24px;background:#fde39f"><span class="num"><bdo dir="ltr">۱,۶۲۴,<i class="z"></i>۸۳</bdo></span></div>
<div class="c" style="left:514px;top:697px;width:85px;height:24px;background:#fde39f"><span class="num">۴۷۳,۲۱۷,۶۵۷</span></div>
<div class="c" style="left:599px;top:697px;width:56px;height:24px;background:#fde39f"><span class="num">۳,۴۳۲</span></div>
<div class="c" style="left:655px;top:697px;width:56px;height:24px;background:#fde39f"><span class="num">۳,۴۳۲</span></div>
<div class="c" style="left:711px;top:697px;width:98px;height:24px;background:#d3e5f6"><span class="num"><bdo dir="ltr">۸۹,<i class="z"></i>۲۱</bdo></span></div>
<div class="c" style="left:809px;top:697px;width:82px;height:24px;background:#fde39f"><span class="num">۵۳۹,۵۲۱,۲۱۲</span></div>
<div class="c" style="left:891px;top:697px;width:54px;height:24px;background:#d3e5f6"><span class="num">۱۶۵</span></div>
<div class="c" style="left:945px;top:697px;width:52px;height:24px;background:#d3e5f6"><span class="num">۱۶۵</span></div>
<div class="c" style="left:997px;top:697px;width:101px;height:24px;background:#fde39f"><span class="num"><bdo dir="ltr">۱,۵۳۵,<i class="z"></i>۶۲</bdo></span></div>
<div class="c" style="left:1098px;top:697px;width:85px;height:24px;background:#fde39f"><span class="num">۴۶۹,۸۶۸,۹۹۳</span></div>
<div class="c" style="left:1183px;top:697px;width:56px;height:24px;background:#fde39f"><span class="num">۳,۲۶۷</span></div>
<div class="c" style="left:1239px;top:697px;width:52px;height:24px;background:#fde39f"><span class="num">۳,۲۶۷</span></div>
<div class="c" style="left:1291px;top:697px;width:89px;height:24px;background:#d3e5f6"><span class="num"><bdo dir="ltr"><i class="z"></i></bdo></span></div>
<div class="c" style="left:1380px;top:697px;width:51px;height:24px;background:#d3e5f6"></div>
<div class="c" style="left:1431px;top:697px;width:47px;height:24px;background:#d3e5f6"></div>
<div class="c" style="left:1478px;top:697px;width:99px;height:24px;background:#d3e5f6"><span class="num"><bdo dir="ltr">۱,۵۳۵,<i class="z"></i>۶۲</bdo></span></div>
<div class="c" style="left:1577px;top:697px;width:86px;height:24px;background:#fde39f"><span class="num">۴۶۹,۸۶۸,۹۹۳</span></div>
<div class="c" style="left:1663px;top:697px;width:55px;height:24px;background:#d3e5f6"><span class="num">۳,۲۶۷</span></div>
<div class="c" style="left:1718px;top:697px;width:54px;height:24px;background:#d3e5f6"><span class="num">۳,۲۶۷</span></div>
<div class="c" style="left:1772px;top:697px;width:27px;height:24px;background:#d3e5f6"><span class="unit">تن</span></div>
<div class="c" style="left:1799px;top:697px;width:86px;height:24px;background:#d3e5f6;border-right:1px solid #b6b6b6"><span class="nm" style="transform:scaleX(0.94);transform-origin:100% 50%">محصول گالوانیزه</span></div>
<div class="c" style="left:35px;top:721px;width:81px;height:41px;background:#efefef"><span class="st">تولید</span></div>
<div class="c" style="left:116px;top:721px;width:104px;height:41px;background:#efefef"><span class="num"><bdo dir="ltr"><i class="z"></i></bdo></span></div>
<div class="c" style="left:220px;top:721px;width:83px;height:41px;background:#fde39f"><span class="num"><bdo dir="ltr"><i class="z"></i></bdo></span></div>
<div class="c" style="left:303px;top:721px;width:56px;height:41px;background:#efefef"></div>
<div class="c" style="left:359px;top:721px;width:54px;height:41px;background:#efefef"></div>
<div class="c" style="left:413px;top:721px;width:101px;height:41px;background:#fde39f"><span class="num"><bdo dir="ltr"><i class="z"></i></bdo></span></div>
<div class="c" style="left:514px;top:721px;width:85px;height:41px;background:#fde39f"><span class="num"><bdo dir="ltr"><i class="z"></i></bdo></span></div>
<div class="c" style="left:599px;top:721px;width:56px;height:41px;background:#fde39f"><span class="num"><bdo dir="ltr"><i class="z"></i></bdo></span></div>
<div class="c" style="left:655px;top:721px;width:56px;height:41px;background:#fde39f"><span class="num"><bdo dir="ltr"><i class="z"></i></bdo></span></div>
<div class="c" style="left:711px;top:721px;width:98px;height:41px;background:#efefef"><span class="num"><bdo dir="ltr"><i class="z"></i></bdo></span></div>
<div class="c" style="left:809px;top:721px;width:82px;height:41px;background:#fde39f"><span class="num"><bdo dir="ltr"><i class="z"></i></bdo></span></div>
<div class="c" style="left:891px;top:721px;width:54px;height:41px;background:#efefef"></div>
<div class="c" style="left:945px;top:721px;width:52px;height:41px;background:#efefef"></div>
<div class="c" style="left:997px;top:721px;width:101px;height:41px;background:#fde39f"><span class="num"><bdo dir="ltr"><i class="z"></i></bdo></span></div>
<div class="c" style="left:1098px;top:721px;width:85px;height:41px;background:#fde39f"><span class="num"><bdo dir="ltr"><i class="z"></i></bdo></span></div>
<div class="c" style="left:1183px;top:721px;width:56px;height:41px;background:#fde39f"><span class="num"><bdo dir="ltr"><i class="z"></i></bdo></span></div>
<div class="c" style="left:1239px;top:721px;width:52px;height:41px;background:#fde39f"><span class="num"><bdo dir="ltr"><i class="z"></i></bdo></span></div>
<div class="c" style="left:1291px;top:721px;width:89px;height:41px;background:#efefef"><span class="num"><bdo dir="ltr"><i class="z"></i></bdo></span></div>
<div class="c" style="left:1380px;top:721px;width:51px;height:41px;background:#efefef"></div>
<div class="c" style="left:1431px;top:721px;width:47px;height:41px;background:#efefef"></div>
<div class="c" style="left:1478px;top:721px;width:99px;height:41px;background:#efefef"><span class="num"><bdo dir="ltr"><i class="z"></i></bdo></span></div>
<div class="c" style="left:1577px;top:721px;width:86px;height:41px;background:#fde39f"><span class="num"><bdo dir="ltr"><i class="z"></i></bdo></span></div>
<div class="c" style="left:1663px;top:721px;width:55px;height:41px;background:#efefef"><span class="num"><bdo dir="ltr"><i class="z"></i></bdo></span></div>
<div class="c" style="left:1718px;top:721px;width:54px;height:41px;background:#efefef"><span class="num"><bdo dir="ltr"><i class="z"></i></bdo></span></div>
<div class="c" style="left:1772px;top:721px;width:27px;height:41px;background:#efefef"><span class="unit">تن</span></div>
<div class="c" style="left:1799px;top:721px;width:86px;height:41px;background:#efefef;border-right:1px solid #b6b6b6"><span class="nm">محصول نورد<br>سرد</span></div>
<div class="c" style="left:35px;top:762px;width:81px;height:42px;background:#fde39f"></div>
<div class="c" style="left:116px;top:762px;width:104px;height:42px;background:#fde39f"><span class="num"><bdo dir="ltr">۲,۴۶<i class="z"></i>,۸۴۳</bdo></span></div>
<div class="c" style="left:220px;top:762px;width:83px;height:42px;background:#fde39f"></div>
<div class="c" style="left:303px;top:762px;width:56px;height:42px;background:#fde39f"><span class="num"><bdo dir="ltr">۷,<i class="z"></i><i class="z"></i>۲</bdo></span></div>
<div class="c" style="left:359px;top:762px;width:54px;height:42px;background:#fde39f"><span class="num"><bdo dir="ltr">۷,<i class="z"></i><i class="z"></i>۲</bdo></span></div>
<div class="c" style="left:413px;top:762px;width:101px;height:42px;background:#fde39f"><span class="num"><bdo dir="ltr">۱,۶۲۴,<i class="z"></i>۸۳</bdo></span></div>
<div class="c" style="left:514px;top:762px;width:85px;height:42px;background:#fde39f"></div>
<div class="c" style="left:599px;top:762px;width:56px;height:42px;background:#fde39f"><span class="num">۳,۴۳۲</span></div>
<div class="c" style="left:655px;top:762px;width:56px;height:42px;background:#fde39f"><span class="num">۳,۴۳۲</span></div>
<div class="c" style="left:711px;top:762px;width:98px;height:42px;background:#fde39f"><span class="num"><bdo dir="ltr">۸۹,<i class="z"></i>۲۱</bdo></span></div>
<div class="c" style="left:809px;top:762px;width:82px;height:42px;background:#fde39f"></div>
<div class="c" style="left:891px;top:762px;width:54px;height:42px;background:#fde39f"><span class="num">۱۶۵</span></div>
<div class="c" style="left:945px;top:762px;width:52px;height:42px;background:#fde39f"><span class="num">۱۶۵</span></div>
<div class="c" style="left:997px;top:762px;width:101px;height:42px;background:#fde39f"><span class="num"><bdo dir="ltr">۱,۵۳۵,<i class="z"></i>۶۲</bdo></span></div>
<div class="c" style="left:1098px;top:762px;width:85px;height:42px;background:#fde39f"></div>
<div class="c" style="left:1183px;top:762px;width:56px;height:42px;background:#fde39f"><span class="num"><bdo dir="ltr"><i class="z"></i></bdo></span></div>
<div class="c" style="left:1239px;top:762px;width:52px;height:42px;background:#fde39f"><span class="num"><bdo dir="ltr"><i class="z"></i></bdo></span></div>
<div class="c" style="left:1291px;top:762px;width:89px;height:42px;background:#fde39f"><span class="num"><bdo dir="ltr"><i class="z"></i></bdo></span></div>
<div class="c" style="left:1380px;top:762px;width:51px;height:42px;background:#fde39f"><span class="num"><bdo dir="ltr"><i class="z"></i></bdo></span></div>
<div class="c" style="left:1431px;top:762px;width:47px;height:42px;background:#fde39f"><span class="num"><bdo dir="ltr"><i class="z"></i></bdo></span></div>
<div class="c" style="left:1478px;top:762px;width:99px;height:42px;background:#fde39f"><span class="num"><bdo dir="ltr">۱,۵۳۵,<i class="z"></i>۶۲</bdo></span></div>
<div class="c" style="left:1577px;top:762px;width:86px;height:42px;background:#fde39f"></div>
<div class="c" style="left:1663px;top:762px;width:55px;height:42px;background:#fde39f"><span class="num">۳,۲۶۷</span></div>
<div class="c" style="left:1718px;top:762px;width:54px;height:42px;background:#fde39f"><span class="num">۳,۲۶۷</span></div>
<div class="c" style="left:1772px;top:762px;width:27px;height:42px;background:#fde39f"></div>
<div class="c" style="left:1799px;top:762px;width:86px;height:42px;background:#fde39f;border-right:1px solid #b6b6b6"><span class="nm">جمع فروش<br>صادراتی</span></div>
<div class="c" style="left:35px;top:804px;width:81px;height:41px;background:#d4d4d4"></div>
<div class="c" style="left:116px;top:804px;width:104px;height:41px;background:#d4d4d4"></div>
<div class="c" style="left:220px;top:804px;width:83px;height:41px;background:#d4d4d4"></div>
<div class="c" style="left:303px;top:804px;width:56px;height:41px;background:#d4d4d4"></div>
<div class="c" style="left:359px;top:804px;width:54px;height:41px;background:#d4d4d4"></div>
<div class="c" style="left:413px;top:804px;width:101px;height:41px;background:#d4d4d4"></div>
<div class="c" style="left:514px;top:804px;width:85px;height:41px;background:#d4d4d4"></div>
<div class="c" style="left:599px;top:804px;width:56px;height:41px;background:#d4d4d4"></div>
<div class="c" style="left:655px;top:804px;width:56px;height:41px;background:#d4d4d4"></div>
<div class="c" style="left:711px;top:804px;width:98px;height:41px;background:#d4d4d4"></div>
<div class="c" style="left:809px;top:804px;width:82px;height:41px;background:#d4d4d4"></div>
<div class="c" style="left:891px;top:804px;width:54px;height:41px;background:#d4d4d4"></div>
<div class="c" style="left:945px;top:804px;width:52px;height:41px;background:#d4d4d4"></div>
<div class="c" style="left:997px;top:804px;width:101px;height:41px;background:#d4d4d4"></div>
<div class="c" style="left:1098px;top:804px;width:85px;height:41px;background:#d4d4d4"></div>
<div class="c" style="left:1183px;top:804px;width:56px;height:41px;background:#d4d4d4"></div>
<div class="c" style="left:1239px;top:804px;width:52px;height:41px;background:#d4d4d4"></div>
<div class="c" style="left:1291px;top:804px;width:89px;height:41px;background:#d4d4d4"></div>
<div class="c" style="left:1380px;top:804px;width:51px;height:41px;background:#d4d4d4"></div>
<div class="c" style="left:1431px;top:804px;width:47px;height:41px;background:#d4d4d4"></div>
<div class="c" style="left:1478px;top:804px;width:99px;height:41px;background:#d4d4d4"></div>
<div class="c" style="left:1577px;top:804px;width:86px;height:41px;background:#d4d4d4"></div>
<div class="c" style="left:1663px;top:804px;width:55px;height:41px;background:#d4d4d4"></div>
<div class="c" style="left:1718px;top:804px;width:54px;height:41px;background:#d4d4d4"></div>
<div class="c" style="left:1772px;top:804px;width:27px;height:41px;background:#d4d4d4"></div>
<div class="c" style="left:1799px;top:804px;width:86px;height:41px;background:#d4d4d4;border-right:1px solid #b6b6b6"><span class="nm cat">درآمد ارائه<br>خدمات:</span></div>
<div class="c" style="left:35px;top:845px;width:81px;height:41px;background:#efefef"><span class="st">تولید</span></div>
<div class="c" style="left:116px;top:845px;width:104px;height:41px;background:#efefef"><span class="num"><bdo dir="ltr">۵۳,۹۷<i class="z"></i></bdo></span></div>
<div class="c" style="left:220px;top:845px;width:83px;height:41px;background:#fde39f"><span class="num"><bdo dir="ltr">۱۵,<i class="z"></i>۱۶,۶۹۴</bdo></span></div>
<div class="c" style="left:303px;top:845px;width:56px;height:41px;background:#efefef"><span class="num">۳,۵۹۴</span></div>
<div class="c" style="left:359px;top:845px;width:54px;height:41px;background:#efefef"><span class="num"><bdo dir="ltr">۱۹,۲۶<i class="z"></i></bdo></span></div>
<div class="c" style="left:413px;top:845px;width:101px;height:41px;background:#fde39f"><span class="num"><bdo dir="ltr"><i class="z"></i></bdo></span></div>
<div class="c" style="left:514px;top:845px;width:85px;height:41px;background:#fde39f"><span class="num"><bdo dir="ltr"><i class="z"></i></bdo></span></div>
<div class="c" style="left:599px;top:845px;width:56px;height:41px;background:#fde39f"><span class="num"><bdo dir="ltr"><i class="z"></i></bdo></span></div>
<div class="c" style="left:655px;top:845px;width:56px;height:41px;background:#fde39f"><span class="num"><bdo dir="ltr">۱۷,۱<i class="z"></i>۳</bdo></span></div>
<div class="c" style="left:711px;top:845px;width:98px;height:41px;background:#efefef"><span class="num"><bdo dir="ltr"><i class="z"></i></bdo></span></div>
<div class="c" style="left:809px;top:845px;width:82px;height:41px;background:#fde39f"><span class="num"><bdo dir="ltr"><i class="z"></i></bdo></span></div>
<div class="c" style="left:891px;top:845px;width:54px;height:41px;background:#efefef"><span class="num"><bdo dir="ltr"><i class="z"></i></bdo></span></div>
<div class="c" style="left:945px;top:845px;width:52px;height:41px;background:#efefef"><span class="num"><bdo dir="ltr">۳,۷۸<i class="z"></i></bdo></span></div>
<div class="c" style="left:997px;top:845px;width:101px;height:41px;background:#fde39f"><span class="num"><bdo dir="ltr"><i class="z"></i></bdo></span></div>
<div class="c" style="left:1098px;top:845px;width:85px;height:41px;background:#fde39f"><span class="num"><bdo dir="ltr"><i class="z"></i></bdo></span></div>
<div class="c" style="left:1183px;top:845px;width:56px;height:41px;background:#fde39f"><span class="num"><bdo dir="ltr"><i class="z"></i></bdo></span></div>
<div class="c" style="left:1239px;top:845px;width:52px;height:41px;background:#fde39f"><span class="num">۱۳,۳۲۳</span></div>
<div class="c" style="left:1291px;top:845px;width:89px;height:41px;background:#efefef"><span class="num"><bdo dir="ltr"><i class="z"></i></bdo></span></div>
<div class="c" style="left:1380px;top:845px;width:51px;height:41px;background:#efefef"><span class="num"><bdo dir="ltr"><i class="z"></i></bdo></span></div>
<div class="c" style="left:1431px;top:845px;width:47px;height:41px;background:#efefef"><span class="num"><bdo dir="ltr"><i class="z"></i></bdo></span></div>
<div class="c" style="left:1478px;top:845px;width:99px;height:41px;background:#efefef"><span class="num"><bdo dir="ltr"><i class="z"></i></bdo></span></div>
<div class="c" style="left:1577px;top:845px;width:86px;height:41px;background:#fde39f"><span class="num"><bdo dir="ltr"><i class="z"></i></bdo></span></div>
<div class="c" style="left:1663px;top:845px;width:55px;height:41px;background:#efefef"><span class="num"><bdo dir="ltr"><i class="z"></i></bdo></span></div>
<div class="c" style="left:1718px;top:845px;width:54px;height:41px;background:#efefef"><span class="num">۱۳,۳۲۳</span></div>
<div class="c" style="left:1772px;top:845px;width:27px;height:41px;background:#efefef"><span class="unit">تن</span></div>
<div class="c" style="left:1799px;top:845px;width:86px;height:41px;background:#efefef;border-right:1px solid #b6b6b6"><span class="nm">خدمات اسید<br>شويي</span></div>
<div class="c" style="left:35px;top:886px;width:81px;height:24px;background:#d3e5f6"><span class="st">تولید</span></div>
<div class="c" style="left:116px;top:886px;width:104px;height:24px;background:#d3e5f6"><span class="num">۶۶۵,۲۶۵</span></div>
<div class="c" style="left:220px;top:886px;width:83px;height:24px;background:#fde39f"><span class="num"><bdo dir="ltr">۴۵,<i class="z"></i>۹۶,۵۹۷</bdo></span></div>
<div class="c" style="left:303px;top:886px;width:56px;height:24px;background:#d3e5f6"><span class="num">۱۴,۷۵۲</span></div>
<div class="c" style="left:359px;top:886px;width:54px;height:24px;background:#d3e5f6"><span class="num">۱۵,۲۴۹</span></div>
<div class="c" style="left:413px;top:886px;width:101px;height:24px;background:#fde39f"><span class="num">۶۷۶,۶۱۷</span></div>
<div class="c" style="left:514px;top:886px;width:85px;height:24px;background:#fde39f"><span class="num"><bdo dir="ltr">۴<i class="z"></i>,۸<i class="z"></i>۹,۲۲۸</bdo></span></div>
<div class="c" style="left:599px;top:886px;width:56px;height:24px;background:#fde39f"><span class="num"><bdo dir="ltr">۱۶,۵۸<i class="z"></i></bdo></span></div>
<div class="c" style="left:655px;top:886px;width:56px;height:24px;background:#fde39f"><span class="num"><bdo dir="ltr">۱۶,۹<i class="z"></i>۳</bdo></span></div>
<div class="c" style="left:711px;top:886px;width:98px;height:24px;background:#d3e5f6"><span class="num">۱۷۸,۱۶۴</span></div>
<div class="c" style="left:809px;top:886px;width:82px;height:24px;background:#fde39f"><span class="num"><bdo dir="ltr">۴۲,<i class="z"></i><i class="z"></i><i class="z"></i>,<i class="z"></i><i class="z"></i><i class="z"></i></bdo></span></div>
<div class="c" style="left:891px;top:886px;width:54px;height:24px;background:#d3e5f6"><span class="num">۴,۲۴۲</span></div>
<div class="c" style="left:945px;top:886px;width:52px;height:24px;background:#d3e5f6"><span class="num"><bdo dir="ltr">۴,<i class="z"></i><i class="z"></i>۵</bdo></span></div>
<div class="c" style="left:997px;top:886px;width:101px;height:24px;background:#fde39f"><span class="num">۴۹۸,۴۵۳</span></div>
<div class="c" style="left:1098px;top:886px;width:85px;height:24px;background:#fde39f"><span class="num"><bdo dir="ltr">۴<i class="z"></i>,۳۹۹,۸۲۲</bdo></span></div>
<div class="c" style="left:1183px;top:886px;width:56px;height:24px;background:#fde39f"><span class="num">۱۲,۳۳۸</span></div>
<div class="c" style="left:1239px;top:886px;width:52px;height:24px;background:#fde39f"><span class="num">۱۲,۸۹۸</span></div>
<div class="c" style="left:1291px;top:886px;width:89px;height:24px;background:#d3e5f6"><span class="num"><bdo dir="ltr"><i class="z"></i></bdo></span></div>
<div class="c" style="left:1380px;top:886px;width:51px;height:24px;background:#d3e5f6"><span class="num"><bdo dir="ltr"><i class="z"></i></bdo></span></div>
<div class="c" style="left:1431px;top:886px;width:47px;height:24px;background:#d3e5f6"><span class="num"><bdo dir="ltr"><i class="z"></i></bdo></span></div>
<div class="c" style="left:1478px;top:886px;width:99px;height:24px;background:#d3e5f6"><span class="num">۴۹۸,۴۵۳</span></div>
<div class="c" style="left:1577px;top:886px;width:86px;height:24px;background:#fde39f"><span class="num"><bdo dir="ltr">۴<i class="z"></i>,۳۹۹,۸۲۲</bdo></span></div>
<div class="c" style="left:1663px;top:886px;width:55px;height:24px;background:#d3e5f6"><span class="num">۱۲,۳۳۸</span></div>
<div class="c" style="left:1718px;top:886px;width:54px;height:24px;background:#d3e5f6"><span class="num">۱۲,۸۹۸</span></div>
<div class="c" style="left:1772px;top:886px;width:27px;height:24px;background:#d3e5f6"><span class="unit">تن</span></div>
<div class="c" style="left:1799px;top:886px;width:86px;height:24px;background:#d3e5f6;border-right:1px solid #b6b6b6"><span class="nm" style="transform:scaleX(0.97);transform-origin:100% 50%">خدمات نورد سرد</span></div>
<div class="c" style="left:35px;top:910px;width:81px;height:24px;background:#efefef"><span class="st">تولید</span></div>
<div class="c" style="left:116px;top:910px;width:104px;height:24px;background:#efefef"><span class="num"><bdo dir="ltr"><i class="z"></i></bdo></span></div>
<div class="c" style="left:220px;top:910px;width:83px;height:24px;background:#fde39f"><span class="num"><bdo dir="ltr"><i class="z"></i></bdo></span></div>
<div class="c" style="left:303px;top:910px;width:56px;height:24px;background:#efefef"><span class="num"><bdo dir="ltr"><i class="z"></i></bdo></span></div>
<div class="c" style="left:359px;top:910px;width:54px;height:24px;background:#efefef"><span class="num"><bdo dir="ltr"><i class="z"></i></bdo></span></div>
<div class="c" style="left:413px;top:910px;width:101px;height:24px;background:#fde39f"><span class="num"><bdo dir="ltr"><i class="z"></i></bdo></span></div>
<div class="c" style="left:514px;top:910px;width:85px;height:24px;background:#fde39f"><span class="num"><bdo dir="ltr"><i class="z"></i></bdo></span></div>
<div class="c" style="left:599px;top:910px;width:56px;height:24px;background:#fde39f"><span class="num"><bdo dir="ltr"><i class="z"></i></bdo></span></div>
<div class="c" style="left:655px;top:910px;width:56px;height:24px;background:#fde39f"><span class="num"><bdo dir="ltr"><i class="z"></i></bdo></span></div>
<div class="c" style="left:711px;top:910px;width:98px;height:24px;background:#efefef"><span class="num"><bdo dir="ltr"><i class="z"></i></bdo></span></div>
<div class="c" style="left:809px;top:910px;width:82px;height:24px;background:#fde39f"><span class="num"><bdo dir="ltr"><i class="z"></i></bdo></span></div>
<div class="c" style="left:891px;top:910px;width:54px;height:24px;background:#efefef"><span class="num"><bdo dir="ltr"><i class="z"></i></bdo></span></div>
<div class="c" style="left:945px;top:910px;width:52px;height:24px;background:#efefef"><span class="num"><bdo dir="ltr"><i class="z"></i></bdo></span></div>
<div class="c" style="left:997px;top:910px;width:101px;height:24px;background:#fde39f"><span class="num"><bdo dir="ltr"><i class="z"></i></bdo></span></div>
<div class="c" style="left:1098px;top:910px;width:85px;height:24px;background:#fde39f"><span class="num"><bdo dir="ltr"><i class="z"></i></bdo></span></div>
<div class="c" style="left:1183px;top:910px;width:56px;height:24px;background:#fde39f"><span class="num"><bdo dir="ltr"><i class="z"></i></bdo></span></div>
<div class="c" style="left:1239px;top:910px;width:52px;height:24px;background:#fde39f"><span class="num"><bdo dir="ltr"><i class="z"></i></bdo></span></div>
<div class="c" style="left:1291px;top:910px;width:89px;height:24px;background:#efefef"><span class="num"><bdo dir="ltr"><i class="z"></i></bdo></span></div>
<div class="c" style="left:1380px;top:910px;width:51px;height:24px;background:#efefef"><span class="num"><bdo dir="ltr"><i class="z"></i></bdo></span></div>
<div class="c" style="left:1431px;top:910px;width:47px;height:24px;background:#efefef"><span class="num"><bdo dir="ltr"><i class="z"></i></bdo></span></div>
<div class="c" style="left:1478px;top:910px;width:99px;height:24px;background:#efefef"><span class="num"><bdo dir="ltr"><i class="z"></i></bdo></span></div>
<div class="c" style="left:1577px;top:910px;width:86px;height:24px;background:#fde39f"><span class="num"><bdo dir="ltr"><i class="z"></i></bdo></span></div>
<div class="c" style="left:1663px;top:910px;width:55px;height:24px;background:#efefef"><span class="num"><bdo dir="ltr"><i class="z"></i></bdo></span></div>
<div class="c" style="left:1718px;top:910px;width:54px;height:24px;background:#efefef"><span class="num"><bdo dir="ltr"><i class="z"></i></bdo></span></div>
<div class="c" style="left:1772px;top:910px;width:27px;height:24px;background:#efefef"><span class="unit">تن</span></div>
<div class="c" style="left:1799px;top:910px;width:86px;height:24px;background:#efefef;border-right:1px solid #b6b6b6"><span class="nm">خدمات آنیلینگ</span></div>
<div class="c" style="left:35px;top:934px;width:81px;height:25px;background:#d3e5f6"><span class="st">تولید</span></div>
<div class="c" style="left:116px;top:934px;width:104px;height:25px;background:#d3e5f6"><span class="num">۳,۱۶۸</span></div>
<div class="c" style="left:220px;top:934px;width:83px;height:25px;background:#fde39f"><span class="num">۵۹,۷۷۳,۵۸۵</span></div>
<div class="c" style="left:303px;top:934px;width:56px;height:25px;background:#d3e5f6"><span class="num">۵۳</span></div>
<div class="c" style="left:359px;top:934px;width:54px;height:25px;background:#d3e5f6"><span class="num">۵۳</span></div>
<div class="c" style="left:413px;top:934px;width:101px;height:25px;background:#fde39f"><span class="num">۱۷,۳۱۷</span></div>
<div class="c" style="left:514px;top:934px;width:85px;height:25px;background:#fde39f"><span class="num">۸۵,۷۲۷,۷۲۳</span></div>
<div class="c" style="left:599px;top:934px;width:56px;height:25px;background:#fde39f"><span class="num"><bdo dir="ltr">۲<i class="z"></i>۲</bdo></span></div>
<div class="c" style="left:655px;top:934px;width:56px;height:25px;background:#fde39f"><span class="num"><bdo dir="ltr"><i class="z"></i></bdo></span></div>
<div class="c" style="left:711px;top:934px;width:98px;height:25px;background:#d3e5f6"><span class="num"><bdo dir="ltr"><i class="z"></i></bdo></span></div>
<div class="c" style="left:809px;top:934px;width:82px;height:25px;background:#fde39f"><span class="num"><bdo dir="ltr"><i class="z"></i></bdo></span></div>
<div class="c" style="left:891px;top:934px;width:54px;height:25px;background:#d3e5f6"><span class="num"><bdo dir="ltr"><i class="z"></i></bdo></span></div>
<div class="c" style="left:945px;top:934px;width:52px;height:25px;background:#d3e5f6"><span class="num"><bdo dir="ltr"><i class="z"></i></bdo></span></div>
<div class="c" style="left:997px;top:934px;width:101px;height:25px;background:#fde39f"><span class="num">۱۷,۳۱۷</span></div>
<div class="c" style="left:1098px;top:934px;width:85px;height:25px;background:#fde39f"><span class="num">۸۵,۷۲۷,۷۲۳</span></div>
<div class="c" style="left:1183px;top:934px;width:56px;height:25px;background:#fde39f"><span class="num"><bdo dir="ltr">۲<i class="z"></i>۲</bdo></span></div>
<div class="c" style="left:1239px;top:934px;width:52px;height:25px;background:#fde39f"><span class="num"><bdo dir="ltr"><i class="z"></i></bdo></span></div>
<div class="c" style="left:1291px;top:934px;width:89px;height:25px;background:#d3e5f6"><span class="num"><bdo dir="ltr"><i class="z"></i></bdo></span></div>
<div class="c" style="left:1380px;top:934px;width:51px;height:25px;background:#d3e5f6"><span class="num"><bdo dir="ltr"><i class="z"></i></bdo></span></div>
<div class="c" style="left:1431px;top:934px;width:47px;height:25px;background:#d3e5f6"><span class="num"><bdo dir="ltr"><i class="z"></i></bdo></span></div>
<div class="c" style="left:1478px;top:934px;width:99px;height:25px;background:#d3e5f6"><span class="num">۱۷,۳۱۷</span></div>
<div class="c" style="left:1577px;top:934px;width:86px;height:25px;background:#fde39f"><span class="num">۸۵,۷۲۷,۷۲۳</span></div>
<div class="c" style="left:1663px;top:934px;width:55px;height:25px;background:#d3e5f6"><span class="num"><bdo dir="ltr">۲<i class="z"></i>۲</bdo></span></div>
<div class="c" style="left:1718px;top:934px;width:54px;height:25px;background:#d3e5f6"><span class="num"><bdo dir="ltr"><i class="z"></i></bdo></span></div>
<div class="c" style="left:1772px;top:934px;width:27px;height:25px;background:#d3e5f6"><span class="unit">تن</span></div>
<div class="c" style="left:1799px;top:934px;width:86px;height:25px;background:#d3e5f6;border-right:1px solid #b6b6b6"><span class="nm">خدمات گالوانیزه</span></div>
<div class="c" style="left:35px;top:959px;width:81px;height:41px;background:#fde39f"></div>
<div class="c" style="left:116px;top:959px;width:104px;height:41px;background:#fde39f"><span class="num"><bdo dir="ltr">۷۲۲,۴<i class="z"></i>۳</bdo></span></div>
<div class="c" style="left:220px;top:959px;width:83px;height:41px;background:#fde39f"></div>
<div class="c" style="left:303px;top:959px;width:56px;height:41px;background:#fde39f"><span class="num">۱۸,۳۹۹</span></div>
<div class="c" style="left:359px;top:959px;width:54px;height:41px;background:#fde39f"><span class="num">۳۴,۵۶۲</span></div>
<div class="c" style="left:413px;top:959px;width:101px;height:41px;background:#fde39f"><span class="num">۶۹۳,۹۳۴</span></div>
<div class="c" style="left:514px;top:959px;width:85px;height:41px;background:#fde39f"></div>
<div class="c" style="left:599px;top:959px;width:56px;height:41px;background:#fde39f"><span class="num">۱۶,۷۸۲</span></div>
<div class="c" style="left:655px;top:959px;width:56px;height:41px;background:#fde39f"><span class="num"><bdo dir="ltr">۳۴,<i class="z"></i><i class="z"></i>۶</bdo></span></div>
<div class="c" style="left:711px;top:959px;width:98px;height:41px;background:#fde39f"><span class="num">۱۷۸,۱۶۴</span></div>
<div class="c" style="left:809px;top:959px;width:82px;height:41px;background:#fde39f"></div>
<div class="c" style="left:891px;top:959px;width:54px;height:41px;background:#fde39f"><span class="num">۴,۲۴۲</span></div>
<div class="c" style="left:945px;top:959px;width:52px;height:41px;background:#fde39f"><span class="num">۷,۷۸۵</span></div>
<div class="c" style="left:997px;top:959px;width:101px;height:41px;background:#fde39f"><span class="num"><bdo dir="ltr">۵۱۵,۷۷<i class="z"></i></bdo></span></div>
<div class="c" style="left:1098px;top:959px;width:85px;height:41px;background:#fde39f"></div>
<div class="c" style="left:1183px;top:959px;width:56px;height:41px;background:#fde39f"><span class="num"><bdo dir="ltr"><i class="z"></i></bdo></span></div>
<div class="c" style="left:1239px;top:959px;width:52px;height:41px;background:#fde39f"><span class="num"><bdo dir="ltr"><i class="z"></i></bdo></span></div>
<div class="c" style="left:1291px;top:959px;width:89px;height:41px;background:#fde39f"><span class="num"><bdo dir="ltr"><i class="z"></i></bdo></span></div>
<div class="c" style="left:1380px;top:959px;width:51px;height:41px;background:#fde39f"><span class="num"><bdo dir="ltr"><i class="z"></i></bdo></span></div>
<div class="c" style="left:1431px;top:959px;width:47px;height:41px;background:#fde39f"><span class="num"><bdo dir="ltr"><i class="z"></i></bdo></span></div>
<div class="c" style="left:1478px;top:959px;width:99px;height:41px;background:#fde39f"><span class="num"><bdo dir="ltr">۵۱۵,۷۷<i class="z"></i></bdo></span></div>
<div class="c" style="left:1577px;top:959px;width:86px;height:41px;background:#fde39f"></div>
<div class="c" style="left:1663px;top:959px;width:55px;height:41px;background:#fde39f"><span class="num"><bdo dir="ltr">۱۲,۵۴<i class="z"></i></bdo></span></div>
<div class="c" style="left:1718px;top:959px;width:54px;height:41px;background:#fde39f"><span class="num">۲۶,۲۲۱</span></div>
<div class="c" style="left:1772px;top:959px;width:27px;height:41px;background:#fde39f"></div>
<div class="c" style="left:1799px;top:959px;width:86px;height:41px;background:#fde39f;border-right:1px solid #b6b6b6"><span class="nm">جمع درآمد ارائه<br>خدمات</span></div>
<div class="c" style="left:35px;top:1000px;width:81px;height:41px;background:#d4d4d4"></div>
<div class="c" style="left:116px;top:1000px;width:104px;height:41px;background:#d4d4d4"></div>
<div class="c" style="left:220px;top:1000px;width:83px;height:41px;background:#d4d4d4"></div>
<div class="c" style="left:303px;top:1000px;width:56px;height:41px;background:#d4d4d4"></div>
<div class="c" style="left:359px;top:1000px;width:54px;height:41px;background:#d4d4d4"></div>
<div class="c" style="left:413px;top:1000px;width:101px;height:41px;background:#d4d4d4"></div>
<div class="c" style="left:514px;top:1000px;width:85px;height:41px;background:#d4d4d4"></div>
<div class="c" style="left:599px;top:1000px;width:56px;height:41px;background:#d4d4d4"></div>
<div class="c" style="left:655px;top:1000px;width:56px;height:41px;background:#d4d4d4"></div>
<div class="c" style="left:711px;top:1000px;width:98px;height:41px;background:#d4d4d4"></div>
<div class="c" style="left:809px;top:1000px;width:82px;height:41px;background:#d4d4d4"></div>
<div class="c" style="left:891px;top:1000px;width:54px;height:41px;background:#d4d4d4"></div>
<div class="c" style="left:945px;top:1000px;width:52px;height:41px;background:#d4d4d4"></div>
<div class="c" style="left:997px;top:1000px;width:101px;height:41px;background:#d4d4d4"></div>
<div class="c" style="left:1098px;top:1000px;width:85px;height:41px;background:#d4d4d4"></div>
<div class="c" style="left:1183px;top:1000px;width:56px;height:41px;background:#d4d4d4"></div>
<div class="c" style="left:1239px;top:1000px;width:52px;height:41px;background:#d4d4d4"></div>
<div class="c" style="left:1291px;top:1000px;width:89px;height:41px;background:#d4d4d4"></div>
<div class="c" style="left:1380px;top:1000px;width:51px;height:41px;background:#d4d4d4"></div>
<div class="c" style="left:1431px;top:1000px;width:47px;height:41px;background:#d4d4d4"></div>
<div class="c" style="left:1478px;top:1000px;width:99px;height:41px;background:#d4d4d4"></div>
<div class="c" style="left:1577px;top:1000px;width:86px;height:41px;background:#d4d4d4"></div>
<div class="c" style="left:1663px;top:1000px;width:55px;height:41px;background:#d4d4d4"></div>
<div class="c" style="left:1718px;top:1000px;width:54px;height:41px;background:#d4d4d4"></div>
<div class="c" style="left:1772px;top:1000px;width:27px;height:41px;background:#d4d4d4"></div>
<div class="c" style="left:1799px;top:1000px;width:86px;height:41px;background:#d4d4d4;border-right:1px solid #b6b6b6"><span class="nm cat">برگشت از<br>فروش:</span></div>
<div class="c" style="left:35px;top:1041px;width:81px;height:42px;background:#fde39f"></div>
<div class="c" style="left:116px;top:1041px;width:104px;height:42px;background:#fde39f"><span class="num"><bdo dir="ltr"><i class="z"></i></bdo></span></div>
<div class="c" style="left:220px;top:1041px;width:83px;height:42px;background:#fde39f"></div>
<div class="c" style="left:303px;top:1041px;width:56px;height:42px;background:#fde39f"><span class="num"><bdo dir="ltr"><i class="z"></i></bdo></span></div>
<div class="c" style="left:359px;top:1041px;width:54px;height:42px;background:#fde39f"></div>
<div class="c" style="left:413px;top:1041px;width:101px;height:42px;background:#fde39f"><span class="num"><bdo dir="ltr"><i class="z"></i></bdo></span></div>
<div class="c" style="left:514px;top:1041px;width:85px;height:42px;background:#fde39f"></div>
<div class="c" style="left:599px;top:1041px;width:56px;height:42px;background:#fde39f"><span class="num"><bdo dir="ltr"><i class="z"></i></bdo></span></div>
<div class="c" style="left:655px;top:1041px;width:56px;height:42px;background:#fde39f"></div>
<div class="c" style="left:711px;top:1041px;width:98px;height:42px;background:#fde39f"><span class="num"><bdo dir="ltr"><i class="z"></i></bdo></span></div>
<div class="c" style="left:809px;top:1041px;width:82px;height:42px;background:#fde39f"></div>
<div class="c" style="left:891px;top:1041px;width:54px;height:42px;background:#fde39f"><span class="num"><bdo dir="ltr"><i class="z"></i></bdo></span></div>
<div class="c" style="left:945px;top:1041px;width:52px;height:42px;background:#fde39f"></div>
<div class="c" style="left:997px;top:1041px;width:101px;height:42px;background:#fde39f"><span class="num"><bdo dir="ltr"><i class="z"></i></bdo></span></div>
<div class="c" style="left:1098px;top:1041px;width:85px;height:42px;background:#fde39f"></div>
<div class="c" style="left:1183px;top:1041px;width:56px;height:42px;background:#fde39f"><span class="num"><bdo dir="ltr"><i class="z"></i></bdo></span></div>
<div class="c" style="left:1239px;top:1041px;width:52px;height:42px;background:#fde39f"></div>
<div class="c" style="left:1291px;top:1041px;width:89px;height:42px;background:#fde39f"><span class="num"><bdo dir="ltr"><i class="z"></i></bdo></span></div>
<div class="c" style="left:1380px;top:1041px;width:51px;height:42px;background:#fde39f"><span class="num"><bdo dir="ltr"><i class="z"></i></bdo></span></div>
<div class="c" style="left:1431px;top:1041px;width:47px;height:42px;background:#fde39f"></div>
<div class="c" style="left:1478px;top:1041px;width:99px;height:42px;background:#fde39f"><span class="num"><bdo dir="ltr"><i class="z"></i></bdo></span></div>
<div class="c" style="left:1577px;top:1041px;width:86px;height:42px;background:#fde39f"></div>
<div class="c" style="left:1663px;top:1041px;width:55px;height:42px;background:#fde39f"><span class="num"><bdo dir="ltr"><i class="z"></i></bdo></span></div>
<div class="c" style="left:1718px;top:1041px;width:54px;height:42px;background:#fde39f"></div>
<div class="c" style="left:1772px;top:1041px;width:27px;height:42px;background:#fde39f"></div>
<div class="c" style="left:1799px;top:1041px;width:86px;height:42px;background:#fde39f;border-right:1px solid #b6b6b6"><span class="nm">جمع برگشت از<br>فروش</span></div>
<div class="h" style="left:35px;top:370px;width:81px;height:65px;">وضعیت<br>محصول-واحد</div>
<div class="h" style="left:116px;top:370px;width:297px;height:24px;border-left:1px solid #7fcdea;">از ابتدای سال مالی تا تاریخ <bdo dir="ltr">۱۴<i class="z"></i>۳/<i class="z"></i>۶/۳۱</bdo></div>
<div class="h" style="left:413px;top:370px;width:298px;height:24px;border-left:1px solid #7fcdea;">از ابتدای سال مالی تا تاریخ <bdo dir="ltr">۱۴<i class="z"></i>۴/<i class="z"></i>۶/۳۱</bdo></div>
<div class="h" style="left:711px;top:370px;width:286px;height:24px;border-left:1px solid #7fcdea;">دوره یک ماهه منتهی به <bdo dir="ltr">۱۴<i class="z"></i>۴/<i class="z"></i>۶/۳۱</bdo></div>
<div class="h" style="left:997px;top:370px;width:294px;height:24px;border-left:1px solid #7fcdea;">از ابتدای سال مالی تا تاریخ <bdo dir="ltr">۱۴<i class="z"></i>۴/<i class="z"></i>۵/۳۱</bdo> (اصلاح شده)</div>
<div class="h" style="left:1291px;top:370px;width:187px;height:24px;border-left:1px solid #7fcdea;">اصلاحات</div>
<div class="h" style="left:1478px;top:370px;width:294px;height:24px;border-left:1px solid #7fcdea;">از ابتدای سال مالی تا تاریخ <bdo dir="ltr">۱۴<i class="z"></i>۴/<i class="z"></i>۵/۳۱</bdo></div>
<div class="h" style="left:1772px;top:370px;width:113px;height:24px;border-left:1px solid #7fcdea;">شرح</div>
<div class="h" style="left:116px;top:394px;width:104px;height:41px;border-left:1px solid #7fcdea;border-top:1px solid #7fcdea;">مبلغ فروش (میلیون<br>ریال)</div>
<div class="h" style="left:220px;top:394px;width:83px;height:41px;border-left:1px solid #7fcdea;border-top:1px solid #7fcdea;">نرخ فروش<br>(ریال)</div>
<div class="h" style="left:303px;top:394px;width:56px;height:41px;border-left:1px solid #7fcdea;border-top:1px solid #7fcdea;">تعداد<br>فروش</div>
<div class="h" style="left:359px;top:394px;width:54px;height:41px;border-left:1px solid #7fcdea;border-top:1px solid #7fcdea;">تعداد<br>تولید</div>
<div class="h" style="left:413px;top:394px;width:101px;height:41px;border-left:1px solid #7fcdea;border-top:1px solid #7fcdea;">مبلغ فروش (میلیون<br>ریال)</div>
<div class="h" style="left:514px;top:394px;width:85px;height:41px;border-left:1px solid #7fcdea;border-top:1px solid #7fcdea;">نرخ فروش<br>(ریال)</div>
<div class="h" style="left:599px;top:394px;width:56px;height:41px;border-left:1px solid #7fcdea;border-top:1px solid #7fcdea;">تعداد<br>فروش</div>
<div class="h" style="left:655px;top:394px;width:56px;height:41px;border-left:1px solid #7fcdea;border-top:1px solid #7fcdea;">تعداد<br>تولید</div>
<div class="h" style="left:711px;top:394px;width:98px;height:41px;border-left:1px solid #7fcdea;border-top:1px solid #7fcdea;">مبلغ فروش<br>(میلیون ریال)</div>
<div class="h" style="left:809px;top:394px;width:82px;height:41px;border-left:1px solid #7fcdea;border-top:1px solid #7fcdea;">نرخ فروش<br>(ریال)</div>
<div class="h" style="left:891px;top:394px;width:54px;height:41px;border-left:1px solid #7fcdea;border-top:1px solid #7fcdea;">تعداد<br>فروش</div>
<div class="h" style="left:945px;top:394px;width:52px;height:41px;border-left:1px solid #7fcdea;border-top:1px solid #7fcdea;">تعداد<br>تولید</div>
<div class="h" style="left:997px;top:394px;width:101px;height:41px;border-left:1px solid #7fcdea;border-top:1px solid #7fcdea;">مبلغ فروش (میلیون<br>ریال)</div>
<div class="h" style="left:1098px;top:394px;width:85px;height:41px;border-left:1px solid #7fcdea;border-top:1px solid #7fcdea;">نرخ فروش<br>(ریال)</div>
<div class="h" style="left:1183px;top:394px;width:56px;height:41px;border-left:1px solid #7fcdea;border-top:1px solid #7fcdea;">تعداد<br>فروش</div>
<div class="h" style="left:1239px;top:394px;width:52px;height:41px;border-left:1px solid #7fcdea;border-top:1px solid #7fcdea;">تعداد<br>تولید</div>
<div class="h" style="left:1291px;top:394px;width:89px;height:41px;border-left:1px solid #7fcdea;border-top:1px solid #7fcdea;">مبلغ فروش<br>(میلیون ریال)</div>
<div class="h" style="left:1380px;top:394px;width:51px;height:41px;border-left:1px solid #7fcdea;border-top:1px solid #7fcdea;">تعداد<br>فروش</div>
<div class="h" style="left:1431px;top:394px;width:47px;height:41px;border-left:1px solid #7fcdea;border-top:1px solid #7fcdea;">تعداد<br>تولید</div>
<div class="h" style="left:1478px;top:394px;width:99px;height:41px;border-left:1px solid #7fcdea;border-top:1px solid #7fcdea;">مبلغ فروش (میلیون<br>ریال)</div>
<div class="h" style="left:1577px;top:394px;width:86px;height:41px;border-left:1px solid #7fcdea;border-top:1px solid #7fcdea;">نرخ فروش<br>(ریال)</div>
<div class="h" style="left:1663px;top:394px;width:55px;height:41px;border-left:1px solid #7fcdea;border-top:1px solid #7fcdea;">تعداد<br>فروش</div>
<div class="h" style="left:1718px;top:394px;width:54px;height:41px;border-left:1px solid #7fcdea;border-top:1px solid #7fcdea;">تعداد<br>تولید</div>
<div class="h" style="left:1772px;top:394px;width:27px;height:41px;border-left:1px solid #7fcdea;border-top:1px solid #7fcdea;">واحد</div>
<div class="h" style="left:1799px;top:394px;width:86px;height:41px;border-left:1px solid #7fcdea;border-top:1px solid #7fcdea;">نام محصول</div>
</div>
<div id="wm">@Codal360.ir</div>
</body>
</html>
